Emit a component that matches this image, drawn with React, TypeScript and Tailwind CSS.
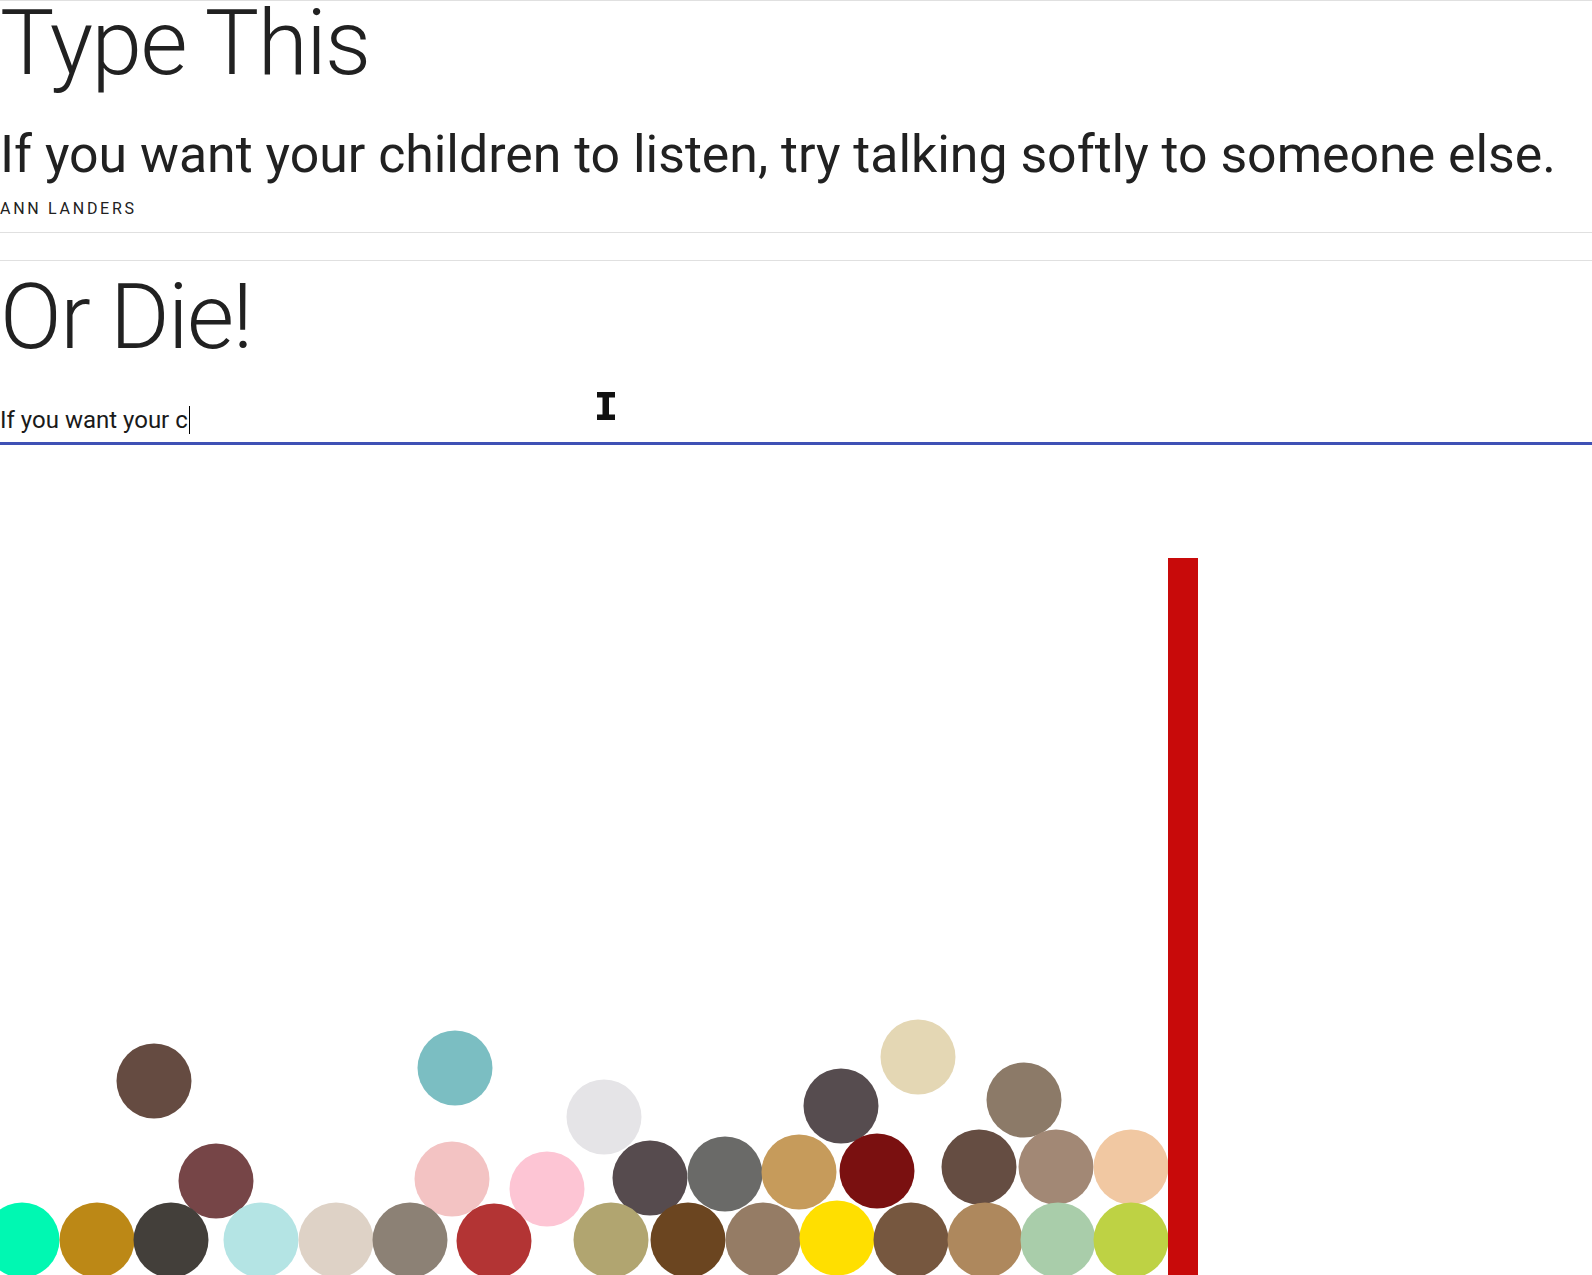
const balls = [
  // top, loose ones
  { x: 154, y: 1081, c: "#654b41" },
  { x: 455, y: 1068, c: "#7bbec2" },
  { x: 604, y: 1117, c: "#e5e4e7" },
  { x: 918, y: 1057, c: "#e4d7b4" },
  { x: 841, y: 1106, c: "#564c4f" },
  { x: 1024, y: 1100, c: "#8c7a68" },
  // middle row
  { x: 216, y: 1181, c: "#764547" },
  { x: 452, y: 1179, c: "#f3c3c3" },
  { x: 547, y: 1189, c: "#fdc5d4" },
  { x: 650, y: 1178, c: "#564b4e" },
  { x: 725, y: 1174, c: "#6a6a68" },
  { x: 799, y: 1172, c: "#c69b5b" },
  { x: 877, y: 1171, c: "#7a1010" },
  { x: 979, y: 1167, c: "#654d42" },
  { x: 1056, y: 1167, c: "#a28875" },
  { x: 1131, y: 1167, c: "#f1c8a2" },
  // floor
  { x: 22, y: 1240, c: "#00f8b2" },
  { x: 97, y: 1240, c: "#bc8816" },
  { x: 171, y: 1240, c: "#433f3a" },
  { x: 261, y: 1240, c: "#b4e4e4" },
  { x: 336, y: 1240, c: "#ded2c6" },
  { x: 410, y: 1240, c: "#8c8175" },
  { x: 494, y: 1241, c: "#b33434" },
  { x: 611, y: 1240, c: "#b1a570" },
  { x: 688, y: 1240, c: "#6b4520" },
  { x: 763, y: 1240, c: "#957c65" },
  { x: 837, y: 1238, c: "#ffdf00" },
  { x: 911, y: 1240, c: "#76573f" },
  { x: 985, y: 1240, c: "#ae885d" },
  { x: 1058, y: 1240, c: "#a9cdaa" },
  { x: 1131, y: 1240, c: "#bed244" },
];

const IBeam = () => (
  <svg width="18" height="28" viewBox="0 0 18 28">
    <rect x="0" y="0" width="18" height="5.5" fill="#111" />
    <rect x="5.5" y="0" width="6.5" height="28" fill="#111" />
    <rect x="0" y="22.5" width="18" height="5.5" fill="#111" />
  </svg>
);

export default function App() {
  return (
    <div className="relative w-[1592px] h-[1275px] overflow-hidden bg-white font-['Roboto',sans-serif] text-[#212121]">
      <section className="border-y border-[#e0e0e0] pb-[14px]">
        <h1 className="mt-[2px] text-[91px] leading-[80px] font-light tracking-[-1.5px]">Type This</h1>
        <p className="mt-[41px] text-[51.8px] leading-[61px]">
          If you want your children to listen, try talking softly to someone else.
        </p>
        <p className="mt-[14px] text-[16px] leading-[19px] tracking-[0.17em] uppercase">Ann Landers</p>
      </section>

      <section className="mt-[27px] border-t border-[#e0e0e0]">
        <h1 className="mt-[16px] text-[91px] leading-[80px] font-light tracking-[-1.5px]">Or Die!</h1>
        <div className="mt-[49px] pb-[8px] border-b-[3px] border-[#3f51b5]">
          <div className="flex items-center h-[28px] text-[24px] leading-[28px] text-[#1a1a1a]">
            <span className="whitespace-pre">If you want your c</span>
            <span className="ml-px w-px h-[28px] bg-black" />
          </div>
        </div>
      </section>

      <div className="h-[830px]">
        <svg width="1592" height="830" viewBox="0 445 1592 830">
          {balls.map((b, i) => (
            <circle key={i} cx={b.x} cy={b.y} r="37.5" fill={b.c} />
          ))}
          <rect x="1168" y="558" width="30" height="720" fill="#c80a0a" />
        </svg>
      </div>

      <div className="absolute left-[597px] top-[392px]">
        <IBeam />
      </div>
    </div>
  );
}
